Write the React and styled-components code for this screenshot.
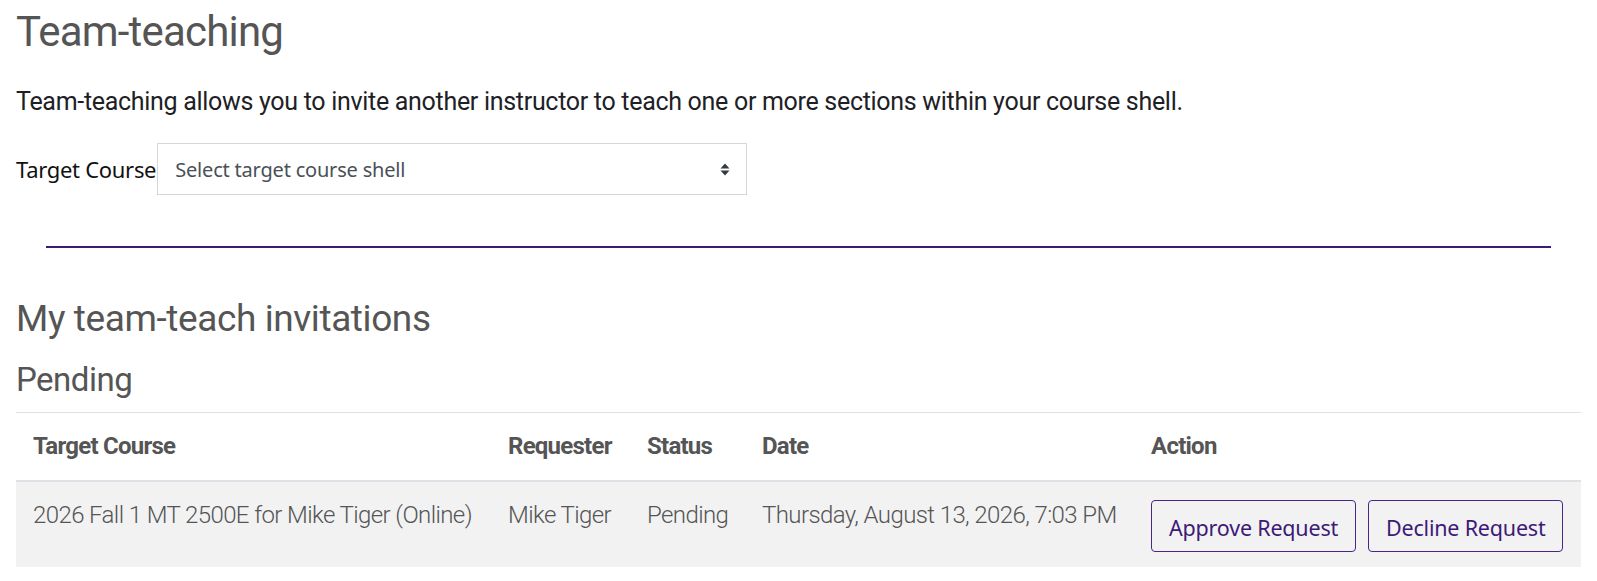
import React from "react";
import styled, { createGlobalStyle } from "styled-components";

const GlobalStyle = createGlobalStyle`
  html, body {
    margin: 0;
    padding: 0;
    background: #fff;
  }
  body {
    font-family: Roboto, "Liberation Sans", sans-serif;
  }
`;

const columns = [
  { label: "Target Course", width: "475px" },
  { label: "Requester", width: "139px" },
  { label: "Status", width: "115px" },
  { label: "Date", width: "389px" },
  { label: "Action" },
];

const invitations = [
  {
    course: "2026 Fall 1 MT 2500E for Mike Tiger (Online)",
    requester: "Mike Tiger",
    status: "Pending",
    date: "Thursday, August 13, 2026, 7:03 PM",
  },
];

const App = () => {
  return (
    <>
      <GlobalStyle />
      <Page>
        <Title>Team-teaching</Title>
        <Intro>
          Team-teaching allows you to invite another instructor to teach one or
          more sections within your course shell.
        </Intro>
        <FormRow>
          <Label>Target Course</Label>
          <SelectBox>
            <span>Select target course shell</span>
            <Caret viewBox="0 0 10 13">
              <path d="M5 0.5 L9.5 5.5 H0.5 Z" />
              <path d="M5 12.5 L9.5 7.5 H0.5 Z" />
            </Caret>
          </SelectBox>
        </FormRow>
        <Divider />
        <SectionTitle>My team-teach invitations</SectionTitle>
        <SubTitle>Pending</SubTitle>
        <Table>
          <thead>
            <tr>
              {columns.map((col) => (
                <Th key={col.label} width={col.width}>
                  {col.label}
                </Th>
              ))}
            </tr>
          </thead>
          <tbody>
            {invitations.map((row) => (
              <Row key={row.course}>
                <Td>{row.course}</Td>
                <Td>{row.requester}</Td>
                <Td>{row.status}</Td>
                <Td>{row.date}</Td>
                <Td>
                  <Actions>
                    <ActionButton>Approve Request</ActionButton>
                    <ActionButton>Decline Request</ActionButton>
                  </Actions>
                </Td>
              </Row>
            ))}
          </tbody>
        </Table>
      </Page>
    </>
  );
};

const Page = styled.div`
  padding: 8px 16px 24px;
`;

const Title = styled.h1`
  margin: 0;
  font-size: 42px;
  font-weight: 400;
  line-height: 48px;
  letter-spacing: -0.8px;
  color: #555;
`;

const Intro = styled.p`
  margin: 31px 0 0;
  font-size: 25px;
  font-weight: 400;
  line-height: 30px;
  letter-spacing: -0.3px;
  color: #1d2125;
`;

const FormRow = styled.div`
  display: flex;
  align-items: center;
  margin-top: 26px;
`;

const Label = styled.span`
  font-family: "Noto Sans", "Open Sans", sans-serif;
  font-size: 22px;
  letter-spacing: -0.3px;
  color: #111;
`;

const SelectBox = styled.div`
  box-sizing: border-box;
  width: 590px;
  height: 52px;
  margin-left: 1px;
  border: 1px solid #d3d6da;
  display: flex;
  align-items: center;
  justify-content: space-between;
  padding: 0 16px 0 17px;
  font-family: "Noto Sans", "Open Sans", sans-serif;
  font-size: 20px;
  letter-spacing: -0.2px;
  color: #495057;
`;

const Caret = styled.svg`
  width: 10px;
  height: 13px;
  fill: #343a40;
`;

const Divider = styled.hr`
  margin: 51px 30px 0;
  border: 0;
  height: 2px;
  background: #3d1a78;
`;

const SectionTitle = styled.h2`
  margin: 49px 0 0;
  font-size: 37px;
  font-weight: 400;
  line-height: 44px;
  letter-spacing: -0.4px;
  color: #555;
`;

const SubTitle = styled.h3`
  margin: 19px 0 0;
  font-size: 33px;
  font-weight: 400;
  line-height: 40px;
  letter-spacing: -0.5px;
  color: #555;
`;

const Table = styled.table`
  margin-top: 12px;
  width: 100%;
  table-layout: fixed;
  border-collapse: collapse;
  border-top: 1px solid #dee2e6;
  color: #555;
`;

const Th = styled.th`
  box-sizing: border-box;
  width: ${(p) => p.width || "auto"};
  text-align: left;
  font-size: 24px;
  font-weight: 700;
  line-height: 27px;
  padding: 20px 16px 20px 17px;
  border-bottom: 2px solid #dee2e6;
  letter-spacing: -0.75px;
`;

const Row = styled.tr`
  background: #f2f2f2;
`;

const Td = styled.td`
  vertical-align: top;
  font-size: 24px;
  font-weight: 300;
  line-height: 28px;
  padding: 19px 16px 15px 17px;
  letter-spacing: -0.6px;
  white-space: nowrap;
`;

const Actions = styled.div`
  display: flex;
  gap: 12px;
  margin-top: -1px;
`;

const ActionButton = styled.button`
  box-sizing: border-box;
  height: 52px;
  padding: 2px 17px 0;
  background: transparent;
  border: 1px solid #4a2585;
  border-radius: 4px;
  font-family: "Noto Sans", "Open Sans", sans-serif;
  font-size: 21.5px;
  letter-spacing: -0.2px;
  color: #3d1a78;
  white-space: nowrap;
  cursor: pointer;
`;

export default App;
